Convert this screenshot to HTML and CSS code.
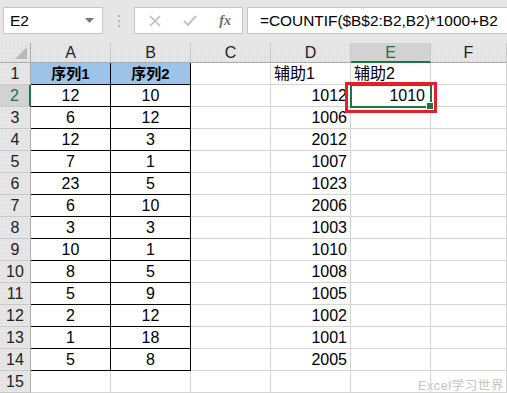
FILE: index.html
```html
<!DOCTYPE html>
<html lang="zh-CN">
<head>
    <meta charset="UTF-8">
    <title>Excel</title>
    <link rel="stylesheet" href="styles.css">
</head>
<body>

<div class="toolbar">
    <div class="namebox">
        <span>E2</span>
        <svg class="caret" width="9" height="5" viewBox="0 0 9 5"><path d="M0 0H9L4.5 5Z" fill="#7a7a7a"/></svg>
    </div>
    <div class="grip"><i></i><i></i><i></i></div>
    <div class="fxbtns">
        <svg width="12" height="12" viewBox="0 0 12 12"><path d="M1 1L11 11M11 1L1 11" stroke="#bdbdbd" stroke-width="1.6"/></svg>
        <svg width="14" height="12" viewBox="0 0 14 12"><path d="M1 6L5 10L13 1" stroke="#c4c4c4" stroke-width="2.2" fill="none"/></svg>
        <span class="fx">fx</span>
    </div>
    <div class="formula">=COUNTIF($B$2:B2,B2)*1000+B2</div>
</div>

<div class="sheet">
    <div class="corner"><b></b></div>
    <div class="ch">A</div><div class="ch">B</div><div class="ch">C</div><div class="ch">D</div><div class="ch on">E</div><div class="ch">F</div>

    <div class="rh">1</div>
    <div class="c t head">序列1</div><div class="c t head">序列2</div><div class="c"></div>
    <div class="c l">辅助1</div><div class="c l">辅助2</div><div class="c"></div>

    <div class="rh on">2</div>
    <div class="c t">12</div><div class="c t">10</div><div class="c"></div>
    <div class="c r">1012</div><div class="c r sel">1010</div><div class="c"></div>

    <div class="rh">3</div>
    <div class="c t">6</div><div class="c t">12</div><div class="c"></div>
    <div class="c r">1006</div><div class="c"></div><div class="c"></div>

    <div class="rh">4</div>
    <div class="c t">12</div><div class="c t">3</div><div class="c"></div>
    <div class="c r">2012</div><div class="c"></div><div class="c"></div>

    <div class="rh">5</div>
    <div class="c t">7</div><div class="c t">1</div><div class="c"></div>
    <div class="c r">1007</div><div class="c"></div><div class="c"></div>

    <div class="rh">6</div>
    <div class="c t">23</div><div class="c t">5</div><div class="c"></div>
    <div class="c r">1023</div><div class="c"></div><div class="c"></div>

    <div class="rh">7</div>
    <div class="c t">6</div><div class="c t">10</div><div class="c"></div>
    <div class="c r">2006</div><div class="c"></div><div class="c"></div>

    <div class="rh">8</div>
    <div class="c t">3</div><div class="c t">3</div><div class="c"></div>
    <div class="c r">1003</div><div class="c"></div><div class="c"></div>

    <div class="rh">9</div>
    <div class="c t">10</div><div class="c t">1</div><div class="c"></div>
    <div class="c r">1010</div><div class="c"></div><div class="c"></div>

    <div class="rh">10</div>
    <div class="c t">8</div><div class="c t">5</div><div class="c"></div>
    <div class="c r">1008</div><div class="c"></div><div class="c"></div>

    <div class="rh">11</div>
    <div class="c t">5</div><div class="c t">9</div><div class="c"></div>
    <div class="c r">1005</div><div class="c"></div><div class="c"></div>

    <div class="rh">12</div>
    <div class="c t">2</div><div class="c t">12</div><div class="c"></div>
    <div class="c r">1002</div><div class="c"></div><div class="c"></div>

    <div class="rh">13</div>
    <div class="c t">1</div><div class="c t">18</div><div class="c"></div>
    <div class="c r">1001</div><div class="c"></div><div class="c"></div>

    <div class="rh">14</div>
    <div class="c t">5</div><div class="c t">8</div><div class="c"></div>
    <div class="c r">2005</div><div class="c"></div><div class="c"></div>

    <div class="rh">15</div>
    <div class="c"></div><div class="c"></div><div class="c"></div>
    <div class="c"></div><div class="c"></div><div class="c"></div>

    <div class="redbox"></div>
    <div class="watermark">Excel学习世界</div>
</div>

</body>
</html>
```

FILE: styles.css
```css
* {margin:0;padding:0;box-sizing:border-box;}
html,body {width:100%;height:100%;overflow:hidden;}
body {
    background:#e6e6e6;
    font-family:"Liberation Sans","Noto Sans CJK SC",sans-serif;
    color:#000;
}

/* 编辑栏 */
.toolbar{
    display:flex;
    align-items:center;
    height:43px;
    padding:7px 0 9px 3px;
}
.namebox{
    display:flex;
    align-items:center;
    justify-content:space-between;
    width:100px;
    height:27px;
    background:#fff;
    border:1px solid #c6c6c6;
    padding:0 8px 0 6px;
    font-size:15.5px;
}
.grip{
    display:flex;
    flex-direction:column;
    gap:3px;
    margin:0 14px 0 15px;
}
.grip i{
    display:block;
    width:2px;
    height:2px;
    background:#b4b4b4;
}
.fxbtns{
    display:flex;
    align-items:center;
    justify-content:space-between;
    width:109px;
    height:27px;
    background:#fff;
    border:1px solid #c6c6c6;
    padding:0 11px 0 14px;
}
.fx{
    font-family:"Liberation Serif",serif;
    font-style:italic;
    font-weight:bold;
    font-size:14px;
    color:#6e6e6e;
}
.formula{
    flex:1;
    height:27px;
    margin-left:4px;
    background:#fff;
    border:1px solid #c6c6c6;
    border-right:0;
    padding-left:12px;
    font-size:15.4px;
    line-height:25px;
    white-space:nowrap;
}

/* 表格 */
.sheet{
    position:relative;
    display:grid;
    grid-template-columns:31px repeat(5,80px) 1fr;
    grid-template-rows:20px repeat(15,22px);
    background:#fff;
}
.corner,.ch,.rh{
    background-color:#e6e6e6;
    background-image:radial-gradient(#d8d8d8 0.6px,transparent 0.8px);
    background-size:4px 4px;
    color:#222;
    font-size:16px;
}
.corner{
    position:relative;
    border-right:1px solid #ababab;
    border-bottom:1px solid #ababab;
}
.corner b{
    position:absolute;
    right:3px;
    bottom:3px;
    width:0;
    height:0;
    border-left:12px solid transparent;
    border-bottom:12px solid #b9b9b9;
}
.ch{
    text-align:center;
    line-height:19px;
    border-right:1px solid #c8c8c8;
    border-bottom:1px solid #ababab;
}
.ch.on{
    background:#d2d2d2;
    color:#217346;
    border-bottom:2px solid #217346;
}
.rh{
    text-align:center;
    line-height:21px;
    border-right:1px solid #ababab;
    border-bottom:1px solid #c8c8c8;
}
.rh.on{
    background:#d2d2d2;
    color:#217346;
    border-right:2px solid #217346;
}
.c{
    border-right:1px solid #d4d4d4;
    border-bottom:1px solid #d4d4d4;
    font-size:16px;
    line-height:21px;
    padding:0 3px;
    white-space:nowrap;
}
.c.t{
    text-align:center;
    border-color:#000;
}
.c.head{
    background:#9dc3e6;
    font-weight:bold;
    font-size:15px;
}
.c.l{text-align:left;}
.c.r{text-align:right;}
.c.sel{
    position:relative;
    outline:2px solid #217346;
    outline-offset:-1px;
    padding-right:5px;
}
.c.sel::after{
    content:"";
    position:absolute;
    right:-4px;
    bottom:-4px;
    width:6px;
    height:6px;
    background:#217346;
    border:1px solid #fff;
}
.redbox{
    position:absolute;
    left:345px;
    top:39px;
    width:92px;
    height:31px;
    border:3px solid #e2202a;
}
.watermark{
    position:absolute;
    right:3px;
    top:332px;
    font-size:12.5px;
    color:#c4c4c4;
    letter-spacing:0.6px;
    text-shadow:0 0 1px #fff;
}
```
